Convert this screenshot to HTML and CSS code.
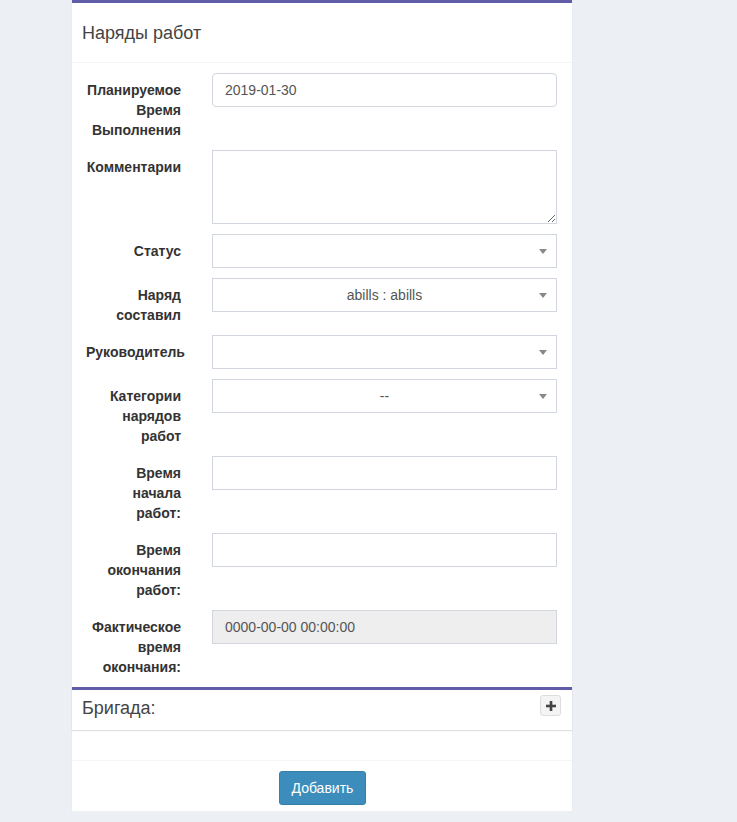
FILE: index.html
```html
<!DOCTYPE html>
<html>
<head>
<meta charset="utf-8">
<link rel="stylesheet" href="styles.css">
</head>
<body>
<div class="box">
  <div class="box-header"><h3 class="box-title">Наряды работ</h3></div>
  <div class="box-body">
    <div class="form-group">
      <label class="control-label">Планируемое Время Выполнения</label>
      <div class="control input rounded">2019-01-30</div>
    </div>
    <div class="form-group">
      <label class="control-label">Комментарии</label>
      <textarea class="control textarea"></textarea>
    </div>
    <div class="form-group">
      <label class="control-label">Статус</label>
      <div class="control select"><span class="select-text"></span><span class="arrow"></span></div>
    </div>
    <div class="form-group">
      <label class="control-label">Наряд составил</label>
      <div class="control select"><span class="select-text">abills : abills</span><span class="arrow"></span></div>
    </div>
    <div class="form-group">
      <label class="control-label">Руководитель</label>
      <div class="control select"><span class="select-text"></span><span class="arrow"></span></div>
    </div>
    <div class="form-group">
      <label class="control-label">Категории нарядов работ</label>
      <div class="control select"><span class="select-text">--</span><span class="arrow"></span></div>
    </div>
    <div class="form-group">
      <label class="control-label">Время начала работ:</label>
      <div class="control input"></div>
    </div>
    <div class="form-group">
      <label class="control-label">Время окончания работ:</label>
      <div class="control input"></div>
    </div>
    <div class="form-group">
      <label class="control-label">Фактическое время окончания:</label>
      <div class="control input disabled">0000-00-00 00:00:00</div>
    </div>
  </div>
  <div class="inner-box">
    <div class="inner-header">
      <h3 class="box-title">Бригада:</h3>
      <button class="btn-tool" type="button">
        <svg width="10" height="10" viewBox="0 0 10 10"><rect x="3.7" y="0" width="2.6" height="10" fill="#444"/><rect x="0" y="3.7" width="10" height="2.6" fill="#444"/></svg>
      </button>
    </div>
  </div>
  <div class="spacer"></div>
  <div class="box-footer">
    <button class="btn-primary" type="button">Добавить</button>
  </div>
</div>
</body>
</html>
```
FILE: styles.css
```css
html, body {
  margin: 0;
  padding: 0;
  background: #ecf0f5;
  font-family: "Liberation Sans", Arial, Helvetica, sans-serif;
  font-size: 14px;
  line-height: 20px;
  color: #333;
}
.box {
  margin-left: 72px;
  width: 500px;
  background: #fff;
  border-top: 3px solid #605ca8;
  box-shadow: 0 1px 1px rgba(0,0,0,0.1);
}
.box-header {
  height: 59px;
  display: flex;
  align-items: center;
  padding-left: 10px;
  border-bottom: 1px solid #f4f4f4;
}
.box-title {
  margin: 0;
  font-size: 18px;
  font-weight: normal;
  line-height: 18px;
  color: #444;
}
.box-body {
  padding: 10px 15px 0 14px;
}
.form-group {
  display: grid;
  grid-template-columns: 95px 345px;
  column-gap: 31px;
  align-items: start;
  margin-bottom: 10px;
}
.control-label {
  padding-top: 7px;
  text-align: right;
  font-weight: bold;
  color: #333;
}
.control {
  box-sizing: border-box;
  height: 34px;
  border: 1px solid #d2d6de;
  background: #fff;
  color: #555;
  font-size: 14px;
  line-height: 20px;
  padding: 6px 12px;
  font-family: inherit;
}
.rounded {
  border-radius: 4px;
}
.textarea {
  display: block;
  width: 345px;
  height: 74px;
  resize: vertical;
  margin: 0;
  outline: none;
}
.select {
  position: relative;
  text-align: center;
  padding: 6px 24px;
}
.arrow {
  position: absolute;
  right: 9px;
  top: 14px;
  width: 0;
  height: 0;
  border-left: 4px solid transparent;
  border-right: 4px solid transparent;
  border-top: 5px solid #888;
}
.disabled {
  background: #eee;
}
.inner-box {
  border-top: 3px solid #605ca8;
  box-shadow: 0 1px 1px rgba(0,0,0,0.12);
}
.inner-header {
  box-sizing: border-box;
  height: 40px;
  display: flex;
  align-items: flex-start;
  justify-content: space-between;
  padding: 0 11px 0 10px;
}
.inner-header .box-title {
  margin-top: 9px;
}
.btn-tool {
  box-sizing: border-box;
  width: 21px;
  height: 21px;
  margin-top: 5px;
  padding: 0;
  display: flex;
  align-items: center;
  justify-content: center;
  background: #f4f4f4;
  border: 1px solid #ddd;
  border-radius: 3px;
}
.spacer {
  height: 30px;
}
.box-footer {
  border-top: 1px solid #f4f4f4;
  padding: 10px 0 6px;
  display: flex;
  justify-content: center;
}
.btn-primary {
  box-sizing: border-box;
  height: 34px;
  width: 87px;
  padding: 6px 12px;
  background: #3c8dbc;
  border: 1px solid #367fa9;
  border-radius: 3px;
  color: #fff;
  font-family: inherit;
  font-size: 14px;
  line-height: 20px;
}
```
